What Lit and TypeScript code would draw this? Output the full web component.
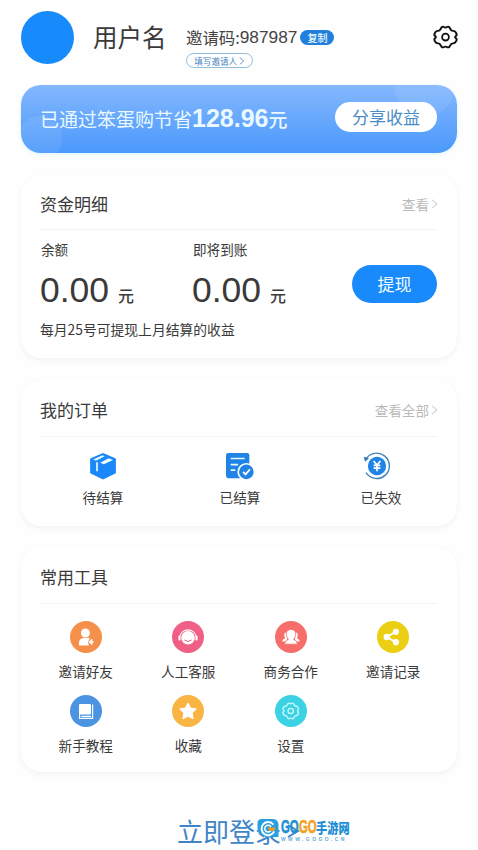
import { LitElement, html, css, svg } from "lit";
import { customElement } from "lit/decorators.js";

const gearPath =
  "M8.6 2.2 Q9.6 1 11 1.9 Q12.5 2.9 14 1.9 Q15.4 1 16.4 2.2 L17.6 4.4 Q18.2 6 20 6.1 Q21.9 6 22.6 7.6 L23.5 9.4 Q24 11 22.7 12 Q21.6 13 22.7 14 Q24 15 23.5 16.6 L22.6 18.4 Q21.9 20 20 19.9 Q18.2 20 17.6 21.6 L16.4 23.8 Q15.4 25 14 24.1 Q12.5 23.1 11 24.1 Q9.6 25 8.6 23.8 L7.4 21.6 Q6.8 20 5 19.9 Q3.1 20 2.4 18.4 L1.5 16.6 Q1 15 2.3 14 Q3.4 13 2.3 12 Q1 11 1.5 9.4 L2.4 7.6 Q3.1 6 5 6.1 Q6.8 6 7.4 4.4 Z";

const orders = [
  {
    label: "待结算",
    icon: svg`
      <path fill="#1a88f8" d="M15 1 L28.8 7 V22.8 L15 29.4 L1.2 22.8 V7 Z"/>
      <path fill="#e8fbff" d="M12 11.4 L21 6.6 L25.8 8.6 L16 13 Z M4.6 8 L14.4 3.4 L16.8 4.5 L7.4 9.4 Z"/>
      <path stroke="#e8fbff" stroke-width="1.8" d="M8.6 11 V20.5"/>`,
  },
  {
    label: "已结算",
    icon: svg`
      <rect x="0" y="1" width="25" height="27" rx="2.5" fill="#1f84e6"/>
      <path stroke="#e8fbff" stroke-width="1.8" d="M5 7 H20 M5 13.5 H13 M5 19.5 H10"/>
      <circle cx="21.8" cy="21.3" r="9.6" fill="#fff"/>
      <circle cx="21.8" cy="21.3" r="7.8" fill="#1f84e6"/>
      <path fill="none" stroke="#fff" stroke-width="1.9" d="M18.2 21.3 L20.9 24 L25.6 18.6"/>`,
  },
  {
    label: "已失效",
    icon: svg`
      <circle cx="15" cy="15" r="9.8" fill="#1f84e6"/>
      <path fill="none" stroke="#4486bb" stroke-width="1.5" d="M3 7.8 A13.6 13.6 0 1 1 3.2 22.2"/>
      <path fill="#3479b5" d="M.8 5 L6.4 6.8 L2.2 10.4 Z"/>
      <path fill="none" stroke="#fff" stroke-width="1.8" d="M11.3 9.6 L15 14 L18.7 9.6 M15 14 V20.6 M11.4 14.4 H18.6 M11.4 17.3 H18.6"/>`,
  },
];

const tools = [
  {
    label: "邀请好友",
    icon: svg`
      <circle cx="16" cy="16" r="16" fill="#f5904a"/>
      <circle cx="15.4" cy="12" r="4.5" fill="#fff"/>
      <path fill="#fff" d="M9 24.4 V22 Q9 17.4 13.5 17 H18.5 L20 17.6 Q17 20.6 19 24.4 Z"/>
      <path fill="none" stroke="#fff" stroke-width="1.6" d="M22.3 18.4 L19.8 20.9 L22.3 23.4 M20 20.9 H23.6"/>`,
  },
  {
    label: "人工客服",
    icon: svg`
      <circle cx="16" cy="16" r="16" fill="#ef5f86"/>
      <circle cx="16" cy="16.8" r="6.8" fill="#fff"/>
      <path fill="none" stroke="#fff" stroke-width="1.1" d="M7.8 15.5 A8.4 8.4 0 0 1 24.2 15.5"/>
      <rect x="6.4" y="14.4" width="2.2" height="5" rx="1" fill="#fff"/>
      <rect x="23.4" y="14.4" width="2.2" height="5" rx="1" fill="#fff"/>
      <path fill="none" stroke="#ef5f86" stroke-width="1" d="M12.4 19 Q16 22 19.6 19"/>`,
  },
  {
    label: "商务合作",
    icon: svg`
      <circle cx="16" cy="16" r="16" fill="#f66d69"/>
      <path fill="#fff" d="M12 20.6 H7.2 Q7.4 18 10 17.2 Q7.8 11.2 11.8 11.2 Z M20 20.6 H24.8 Q24.6 18 22 17.2 Q24.2 11.2 20.2 11.2 Z"/>
      <path fill="#fff" stroke="#f66d69" stroke-width=".8" d="M9.6 23.2 Q9.8 19.4 13.4 18.4 C9.6 14 11 8.4 16 8.4 C21 8.4 22.4 14 18.6 18.4 Q22.2 19.4 22.4 23.2 Z"/>`,
  },
  {
    label: "邀请记录",
    icon: svg`
      <circle cx="16" cy="16" r="16" fill="#ebcf12"/>
      <path fill="none" stroke="#fff" stroke-width="1.8" d="M18.8 10.8 L9.8 16 L18.8 21.2"/>
      <circle cx="9.8" cy="16" r="3.2" fill="#fff"/>
      <circle cx="18.9" cy="10.8" r="3.1" fill="#fff"/>
      <circle cx="18.9" cy="21.2" r="3.1" fill="#fff"/>`,
  },
  {
    label: "新手教程",
    icon: svg`
      <circle cx="16" cy="16" r="16" fill="#4a94e2"/>
      <rect x="9" y="9" width="12" height="10.6" rx="1" fill="#fff"/>
      <path fill="none" stroke="#fff" stroke-width="1.2" d="M9.6 18.5 V23.4 H22.6 V9.4 M11.4 21.4 H21"/>`,
  },
  {
    label: "收藏",
    icon: svg`
      <circle cx="16" cy="16" r="16" fill="#f9b544"/>
      <path fill="#fff" stroke="#fff" stroke-width="1.6" stroke-linejoin="round" d="M16 8.6 L18.3 13.3 L23.8 14 L19.8 17.7 L20.8 23.3 L16 20.8 L11.2 23.3 L12.2 17.7 L8.2 14 L13.7 13.3 Z"/>`,
  },
  {
    label: "设置",
    icon: svg`
      <circle cx="16" cy="16" r="16" fill="#3bd3e4"/>
      <g transform="translate(7 7.1) scale(.7 .68)" fill="none" stroke="#c8f8fd" stroke-width="2">
        <path d=${gearPath}/>
        <circle cx="12.5" cy="13" r="3.8"/>
      </g>`,
  },
];

@customElement("app-root")
export class AppRoot extends LitElement {
  static styles = css`
    :host {
      display: block;
      box-sizing: border-box;
      position: relative;
      width: 478px;
      height: 850px;
      padding: 11px 21px 0;
      overflow: hidden;
      background: #fefefe;
      color: #3a3a3a;
      font-family: "Noto Sans CJK SC", sans-serif;
      white-space: nowrap;
    }
    svg { display: block; flex: none; }
    .num { font-family: "Liberation Sans", Arial, sans-serif; }
    .header { display: flex; height: 53px; margin-bottom: 21px; }
    .avatar { width: 53px; height: 53px; border-radius: 50%; background: #188bfc; }
    .name { margin-left: 19px; width: 93px; font-size: 24.5px; line-height: 52px; }
    .invite { flex: 1; }
    .code { display: flex; align-items: center; height: 20px; margin-top: 16px; font-size: 16.4px; color: #444; }
    .code .num { font-size: 17.3px; }
    .copy { margin-left: 3px; width: 34px; height: 15px; line-height: 15px; border-radius: 8px; background: #2280da; color: #e9faff; font-size: 10px; text-align: center; font-weight: 500; }
    .fill { box-sizing: border-box; display: flex; align-items: center; justify-content: center; gap: 2px; width: 67px; height: 15px; margin-top: 6px; border: 1px solid #8fbcdc; border-radius: 8px; font-size: 8.6px; line-height: 12px; color: #4a86c0; }
    .settings { margin: 13px -1px 0 0; }
    .banner { box-sizing: border-box; position: relative; display: flex; align-items: center; justify-content: space-between; height: 68px; padding: 0 20px 0 19px; margin-bottom: 22px; border-radius: 20px; overflow: hidden; background: linear-gradient(#84b7fe, #4b99fc); box-shadow: 0 1px 4px #d9f1ff; }
    .banner::before, .banner::after { content: ""; position: absolute; border-radius: 50%; background: rgba(255, 255, 255, .08); }
    .banner::before { width: 44px; height: 44px; left: -3px; top: 31px; }
    .banner::after { width: 62px; height: 62px; right: 1px; top: -31px; }
    .saved { display: flex; align-items: baseline; font-size: 19px; line-height: 30px; margin-top: -2px; color: #e9f9ff; }
    .saved b { font-size: 25px; }
    .saved em { font-style: normal; font-weight: 500; }
    .share { position: relative; z-index: 1; width: 102px; height: 30px; margin-top: -4px; border-radius: 15px; background: #fff; color: #4a8cc8; font-size: 17px; line-height: 29px; text-align: center; }
    .card { box-sizing: border-box; border-radius: 20px; padding: 0 20px 0 19px; background: #fff; box-shadow: 0 3px 6px rgba(0, 0, 0, .04), 0 0 2px rgba(0, 0, 0, .04); }
    .funds { height: 183px; margin-bottom: 22px; }
    .orders { height: 146px; margin-bottom: 21px; }
    .tools { height: 225px; }
    .head { display: flex; justify-content: space-between; align-items: center; box-sizing: border-box; border-bottom: 1px solid #f4f4f4; height: 55px; }
    .orders .head, .tools .head { height: 57px; }
    .title { font-size: 17px; line-height: 24px; }
    .funds .head { padding-top: 3px; }
    .orders .head { padding-top: 4px; }
    .tools .head { padding-top: 4px; }
    .more { display: flex; align-items: center; gap: 2px; font-size: 13.6px; color: #bababa; margin-right: -1px; }
    .amounts { display: grid; grid-template-columns: 152px 160px 85px; height: 78px; padding-top: 9px; }
    .caption { font-size: 13.6px; line-height: 20px; padding-left: 1px; }
    .sum { display: flex; align-items: baseline; line-height: 50px; margin-top: 6px; font-size: 16px; font-weight: 500; gap: 9px; }
    .sum .num { font-size: 35.5px; font-weight: 400; }
    .withdraw { width: 85px; height: 38px; margin-top: 26px; border-radius: 19px; background: #188afb; color: #f0fbff; font-size: 17px; line-height: 37px; text-align: center; }
    .note { font-size: 13.8px; line-height: 20px; margin-top: 2px; }
    .order-row { display: flex; padding-top: 15px; margin-left: 33px; gap: 77px; }
    .item { display: flex; flex-direction: column; align-items: center; font-size: 13.6px; line-height: 20px; }
    .order-row .item { width: 60px; gap: 7px; }
    .order-row .item:last-child { margin-left: 4px; }
    .order-row .item:last-child svg { margin-left: -8px; }
    .tool-grid { display: grid; grid-template-columns: repeat(4, 102.5px); margin: 17px -8px 0 -5.5px; row-gap: 18px; }
    .tool-grid .item { gap: 7.5px; height: 56px; }
    .login { position: absolute; left: 177px; top: 812px; display: flex; align-items: center; gap: 6px; font-size: 26px; line-height: 38px; color: #3e85c8; }
    .mark { position: absolute; left: 257px; top: 818px; display: flex; align-items: flex-start; }
    .mark-name { display: flex; align-items: center; height: 18px; font-size: 11.2px; font-weight: 900; color: #1f8fd5; }
    .go { width: 17.5px; font: 900 17.5px/18px "Liberation Sans", sans-serif; transform: scaleX(.65); transform-origin: left; -webkit-text-stroke: .6px currentColor; }
    .go.orange { color: #f6a11e; }
    .cn { transform: scaleY(1.18); }
    .mark-url { font: bold 5px/6px "Liberation Sans", sans-serif; letter-spacing: 2.4px; color: #6cabd2; }
  `;

  private chevron(size = 10, color = "#c2c2c2") {
    return html`<svg width=${size * 0.7} height=${size} viewBox="0 0 7 10">
      <path d="M1 .8 L6 5 L1 9.2" fill="none" stroke=${color} stroke-width="1"/>
    </svg>`;
  }

  private amount(caption: string) {
    return html`<div>
      <div class="caption">${caption}</div>
      <div class="sum"><span class="num">0.00</span><span>元</span></div>
    </div>`;
  }

  render() {
    return html`
      <div class="header">
        <div class="avatar"></div>
        <div class="name">用户名</div>
        <div class="invite">
          <div class="code">邀请码:<span class="num">987987</span><span class="copy">复制</span></div>
          <div class="fill">填写邀请人${this.chevron(8, "#4a86c0")}</div>
        </div>
        <svg class="settings" width="25" height="26" viewBox="0 0 25 26">
          <path d=${gearPath} transform="translate(0 1.4) scale(1 .9)" fill="none" stroke="#111" stroke-width="2"/>
          <circle cx="12.5" cy="13.1" r="3.4" fill="none" stroke="#111" stroke-width="1.8"/>
        </svg>
      </div>

      <div class="banner">
        <div class="saved">已通过笨蛋购节省<b class="num">128.96</b><em>元</em></div>
        <div class="share">分享收益</div>
      </div>

      <section class="card funds">
        <div class="head"><div class="title">资金明细</div><div class="more">查看${this.chevron()}</div></div>
        <div class="amounts">
          ${this.amount("余额")} ${this.amount("即将到账")}
          <div class="withdraw">提现</div>
        </div>
        <div class="note">每月25号可提现上月结算的收益</div>
      </section>

      <section class="card orders">
        <div class="head"><div class="title">我的订单</div><div class="more">查看全部${this.chevron()}</div></div>
        <div class="order-row">
          ${orders.map((o) => html`<div class="item"><svg width="28" height="28" viewBox="0 0 30 30">${o.icon}</svg>${o.label}</div>`)}
        </div>
      </section>

      <section class="card tools">
        <div class="head"><div class="title">常用工具</div></div>
        <div class="tool-grid">
          ${tools.map((t) => html`<div class="item"><svg width="32" height="32" viewBox="0 0 32 32">${t.icon}</svg>${t.label}</div>`)}
        </div>
      </section>

      <div class="login">立即登录
        <svg width="14" height="14" viewBox="0 0 14 14"><path d="M1 1 L11 7 L1 13" fill="none" stroke="#3e85c8" stroke-width="2"/></svg>
      </div>
      <div class="mark">
        <svg width="24" height="21" viewBox="0 0 24 21">
          <path d="M.5 5 Q.5 1 5 1 H16 Q21.5 1.5 21.5 7 V19 H9 Q.5 18 .5 10 Z" fill="#2a9fe0"/>
          <path d="M16.4 6.6 A6.6 6.6 0 1 0 17.2 13.4" fill="none" stroke="#fff" stroke-width="2"/>
          <path d="M14 8.8 A3.4 3.4 0 1 0 13.8 12.8" fill="none" stroke="#fff" stroke-width="1.5"/>
          <path d="M10.8 9.6 H18.6 L16.8 13 H12.4 Z" fill="#f79a1c"/>
        </svg>
        <div>
          <div class="mark-name"><span class="go">GO</span><span class="go orange">GO</span><span class="cn">手游网</span></div>
          <div class="mark-url">WWW.GOGO.CN</div>
        </div>
      </div>
    `;
  }
}
